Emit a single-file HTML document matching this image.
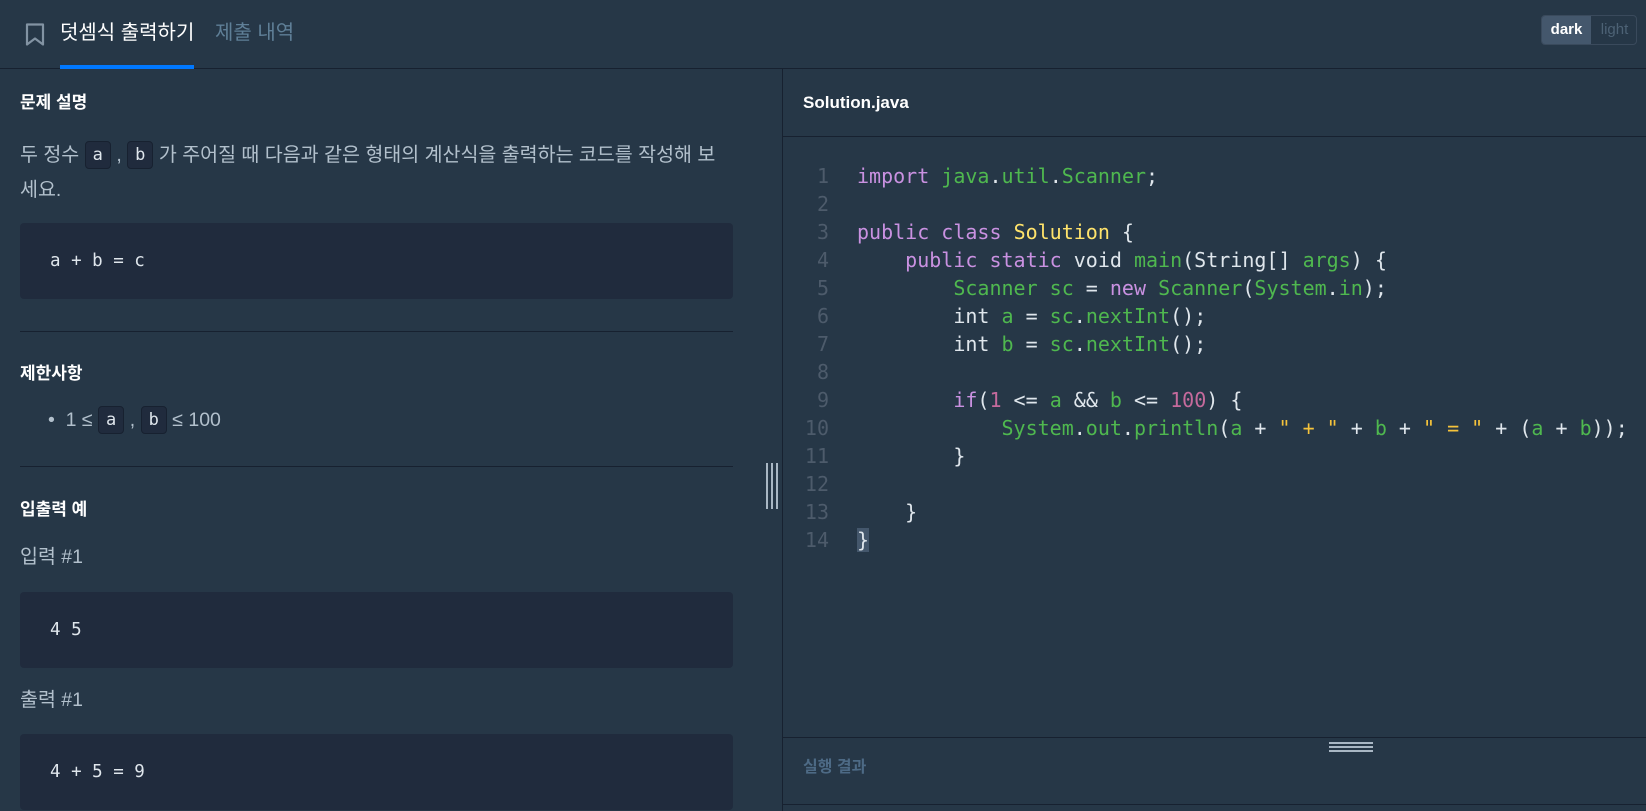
<!DOCTYPE html>
<html><head><meta charset="utf-8"><style>
*{margin:0;padding:0;box-sizing:border-box}
body{width:1646px;height:811px;overflow:hidden;background:#263747;font-family:"Liberation Sans","Noto Sans CJK KR",sans-serif;color:#b2c0cc;position:relative}
.a{position:absolute;white-space:nowrap}
.hdr{left:0;top:0;width:1646px;height:69px;border-bottom:1px solid #172130;background:#263747}
.tab{left:60px;top:16px;font-size:20px;color:#fff;line-height:34px}
.tab2{left:215px;top:16px;font-size:20px;color:#5f7f97;line-height:34px}
.ul{left:60px;top:65px;width:134px;height:4px;background:#0078ff}
.tog{left:1541px;top:15px;width:96px;height:30px;border:1px solid #3a4a5c;border-radius:4px;overflow:hidden;font-size:15px;line-height:28px}
.tog span{position:absolute;top:0;height:28px;text-align:center}
h3{font-size:17px;color:#fff;font-weight:bold;position:absolute;white-space:nowrap;line-height:24px}
.p{font-size:19.5px;line-height:36px}
.chip{display:inline-block;background:#202b3d;border:1px solid #172130;border-radius:4px;font-family:"DejaVu Sans Mono",monospace;font-size:17px;line-height:26px;padding:0 7px;color:#dfe6ec;vertical-align:1px}
.blk{left:20px;width:713px;height:76px;background:#202b3d;border-radius:4px;font-family:"DejaVu Sans Mono",monospace;font-size:17.5px;color:#dfe6ec;padding-left:30px;line-height:76px}
.hr{left:20px;width:713px;height:1px;background:#172130}
.vdiv{left:782px;top:69px;width:1px;height:742px;background:#172130}
.code{left:783px;top:162px;font-family:"DejaVu Sans Mono",monospace;font-size:20px;line-height:28px;color:#dfe6ec}
.code div{white-space:pre;height:28px}
.ln{display:inline-block;width:46px;text-align:right;color:#4d5b6b;margin-right:28px}
.k{color:#c991e1}.g{color:#4fb84f}.y{color:#ffe36b}.n{color:#c56a9c}.s{color:#f5c33b}
</style></head><body>
<div class="a hdr"></div>
<svg class="a" style="left:25px;top:23px" width="20" height="24" viewBox="0 0 20 24"><path d="M2 1.5h16v20l-8-6-8 6z" fill="none" stroke="#8293a3" stroke-width="2.2" stroke-linejoin="round"/></svg>
<div class="a tab">덧셈식 출력하기</div>
<div class="a tab2">제출 내역</div>
<div class="a ul"></div>
<div class="a tog"><span style="left:0;width:49px;background:#44576c;color:#fff;font-weight:bold">dark</span><span style="left:49px;width:47px;color:#4d6275">light</span></div>

<h3 style="left:20px;top:91px">문제 설명</h3>
<div class="a p" style="left:20px;top:137px">두 정수 <span class="chip">a</span> , <span class="chip">b</span> 가 주어질 때 다음과 같은 형태의 계산식을 출력하는 코드를 작성해 보</div>
<div class="a p" style="left:20px;top:172px">세요.</div>
<div class="a blk" style="top:223px">a + b = c</div>
<div class="a hr" style="top:331px"></div>
<h3 style="left:20px;top:362px">제한사항</h3>
<div class="a p" style="left:48px;top:402px">•&nbsp;&nbsp;1 ≤ <span class="chip">a</span> , <span class="chip">b</span> ≤ 100</div>
<div class="a hr" style="top:466px"></div>
<h3 style="left:20px;top:498px">입출력 예</h3>
<div class="a p" style="left:20px;top:539px">입력 #1</div>
<div class="a blk" style="top:592px">4 5</div>
<div class="a p" style="left:20px;top:682px">출력 #1</div>
<div class="a blk" style="top:734px">4 + 5 = 9</div>

<div class="a" style="left:766px;top:463px;width:2px;height:46px;background:#a9b7c4"></div>
<div class="a" style="left:771px;top:463px;width:2px;height:46px;background:#a9b7c4"></div>
<div class="a" style="left:776px;top:463px;width:2px;height:46px;background:#a9b7c4"></div>

<div class="a vdiv"></div>
<div class="a" style="left:803px;top:91px;font-size:17px;font-weight:bold;color:#fff;line-height:24px">Solution.java</div>
<div class="a" style="left:783px;top:136px;width:863px;height:1px;background:#172130"></div>
<div class="a code">
<div><span class="ln">1</span><span class="k">import</span> <span class="g">java</span>.<span class="g">util</span>.<span class="g">Scanner</span>;</div>
<div><span class="ln">2</span></div>
<div><span class="ln">3</span><span class="k">public</span> <span class="k">class</span> <span class="y">Solution</span> {</div>
<div><span class="ln">4</span>    <span class="k">public</span> <span class="k">static</span> void <span class="g">main</span>(String[] <span class="g">args</span>) {</div>
<div><span class="ln">5</span>        <span class="g">Scanner</span> <span class="g">sc</span> = <span class="k">new</span> <span class="g">Scanner</span>(<span class="g">System</span>.<span class="g">in</span>);</div>
<div><span class="ln">6</span>        int <span class="g">a</span> = <span class="g">sc</span>.<span class="g">nextInt</span>();</div>
<div><span class="ln">7</span>        int <span class="g">b</span> = <span class="g">sc</span>.<span class="g">nextInt</span>();</div>
<div><span class="ln">8</span></div>
<div><span class="ln">9</span>        <span class="k">if</span>(<span class="n">1</span> &lt;= <span class="g">a</span> &amp;&amp; <span class="g">b</span> &lt;= <span class="n">100</span>) {</div>
<div><span class="ln">10</span>            <span class="g">System</span>.<span class="g">out</span>.<span class="g">println</span>(<span class="g">a</span> + <span class="s">" + "</span> + <span class="g">b</span> + <span class="s">" = "</span> + (<span class="g">a</span> + <span class="g">b</span>));</div>
<div><span class="ln">11</span>        }</div>
<div><span class="ln">12</span></div>
<div><span class="ln">13</span>    }</div>
<div><span class="ln">14</span><span style="background:#44576c">}</span></div>
</div>
<div class="a" style="left:783px;top:737px;width:863px;height:1px;background:#172130"></div>
<div class="a" style="left:1329px;top:742px;width:44px;height:2px;background:#a9b7c4"></div>
<div class="a" style="left:1329px;top:746px;width:44px;height:2px;background:#a9b7c4"></div>
<div class="a" style="left:1329px;top:750px;width:44px;height:2px;background:#a9b7c4"></div>
<div class="a" style="left:803px;top:757px;font-size:16px;font-weight:bold;color:#4d6a85;line-height:22px">실행 결과</div>
<div class="a" style="left:783px;top:804px;width:863px;height:1px;background:#172130"></div>
</body></html>
